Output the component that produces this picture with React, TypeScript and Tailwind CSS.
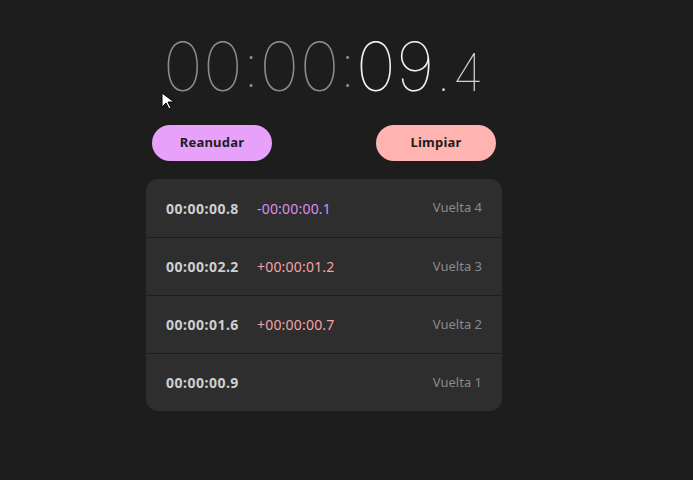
import React from "react";

const laps = [
  { total: "00:00:00.8", diff: "-00:00:00.1", diffColor: "text-[#d98ef0]", label: "Vuelta 4" },
  { total: "00:00:02.2", diff: "+00:00:01.2", diffColor: "text-[#f3a3a3]", label: "Vuelta 3" },
  { total: "00:00:01.6", diff: "+00:00:00.7", diffColor: "text-[#f3a3a3]", label: "Vuelta 2" },
  { total: "00:00:00.9", diff: "", diffColor: "", label: "Vuelta 1" },
];

export default function App() {
  return (
    <div className="relative w-[693px] h-[480px] bg-[#1d1d1d] overflow-hidden" style={{ fontFamily: '"Noto Sans", "Open Sans", sans-serif' }}>
      <div className="flex flex-col items-center pt-[32px] pr-[45px]">
        <div className="flex items-baseline h-[75px] font-thin" style={{ fontFamily: 'Inter, Lato, sans-serif' }}>
          <span className="text-[68px] leading-none text-[#8c8c8c] tracking-[0px]">00</span>
          <span className="text-[60px] leading-none text-[#8c8c8c] mx-[0px] relative top-[-4px]">:</span>
          <span className="text-[68px] leading-none text-[#8c8c8c] tracking-[0px]">00</span>
          <span className="text-[60px] leading-none text-[#8c8c8c] mx-[0px] relative top-[-4px]">:</span>
          <span className="text-[68px] leading-none text-[#f2f2f2] tracking-[0px]">09</span>
          <span className="text-[52px] leading-none text-[#d0d0d0] ml-[2px] tracking-[2px]">.4</span>
        </div>
        <div className="w-[344px] flex justify-between mt-[18px]">
          <button className="w-[120px] h-[36px] rounded-full bg-[#e7a1fb] text-[#1d1d1d] text-[13px] tracking-[0.2px] font-bold">Reanudar</button>
          <button className="w-[120px] h-[36px] rounded-full bg-[#ffb4b1] text-[#1d1d1d] text-[13px] tracking-[0.2px] font-bold">Limpiar</button>
        </div>
        <div className="w-[356px] mt-[18px] rounded-[12px] bg-[#2e2e2e] overflow-hidden">
          {laps.map((l, i) => (
            <div key={l.label} className={`flex items-center h-[58px] px-[20px] ${i > 0 ? "border-t border-[#1e1e1e]" : ""}`}>
              <span className="w-[91px] font-bold text-[14px] text-[#cfcfcf] tracking-[0.5px]">{l.total}</span>
              <span className={`flex-1 text-[14px] tracking-[0.2px] ${l.diffColor}`}>{l.diff}</span>
              <span className="text-[13px] text-[#8a8a8a]">{l.label}</span>
            </div>
          ))}
        </div>
      </div>
      <svg className="absolute left-[161px] top-[92px]" width="16" height="18" viewBox="0 0 16 18">
        <path d="M1 1 L1 15 L5 11 L8 17 L10 16 L7 10 L13 10 Z" fill="#fff" stroke="#000" strokeWidth="1" />
      </svg>
    </div>
  );
}
